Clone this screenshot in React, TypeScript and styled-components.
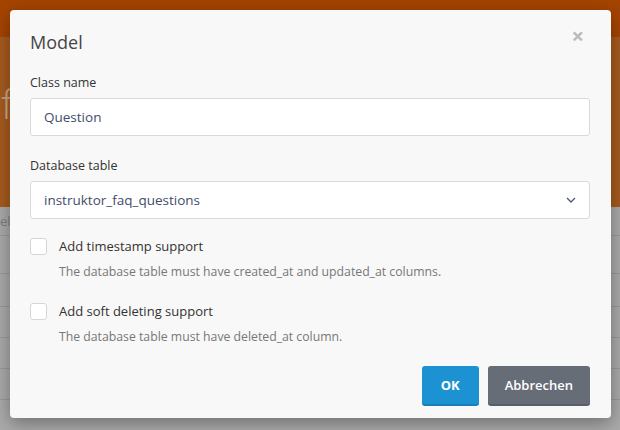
import React from "react";
import styled, { createGlobalStyle } from "styled-components";

const Global = createGlobalStyle`
  html, body { margin: 0; padding: 0; }
  body { width: 620px; height: 430px; overflow: hidden; font-family: "Open Sans", "Noto Sans", sans-serif; }
  * { box-sizing: border-box; }
`;

const Page = styled.div`
  position: relative;
  width: 620px;
  height: 430px;
  overflow: hidden;
  background: #aaaaaa;
  display: flex;
  flex-direction: column;
`;

const TopBar = styled.div`
  height: 37px;
  background: #a54400;
  flex: none;
`;

const Hero = styled.div`
  height: 170px;
  background: #a65b1e;
  flex: none;
  display: flex;
  align-items: center;
`;

const HeroText = styled.div`
  font-size: 40px;
  font-weight: 300;
  color: #c9a88a;
  margin-left: 1px;
  margin-top: -38px;
`;

const TableArea = styled.div`
  flex: 1;
  display: flex;
  flex-direction: column;
`;

const TableRow = styled.div<{ $h: number }>`
  height: ${(p) => p.$h}px;
  border-bottom: 1px solid #999999;
  display: flex;
  align-items: center;
  font-size: 13px;
  color: #7d7d7d;
  flex: none;
`;

const Overlay = styled.div`
  position: absolute;
  inset: 0;
`;

const Modal = styled.div`
  position: absolute;
  left: 10px;
  top: 10px;
  width: 601px;
  height: 408px;
  background: #f8f8f8;
  border-radius: 4px;
  box-shadow: 0 5px 18px rgba(0, 0, 0, 0.35);
  display: flex;
  flex-direction: column;
`;

const Header = styled.div`
  display: flex;
  align-items: flex-start;
  justify-content: space-between;
  padding: 20px 27px 0 20px;
  height: 64px;
`;

const Title = styled.h4`
  margin: 0;
  font-size: 18px;
  font-weight: 400;
  color: #454545;
  line-height: 24px;
`;

const Close = styled.span`
  font-size: 22px;
  font-weight: 700;
  color: #bbbbbb;
  line-height: 10px;
`;

const Body = styled.div`
  display: flex;
  flex-direction: column;
  padding: 0 21px 0 20px;
`;

const Field = styled.div<{ $mb: number }>`
  display: flex;
  flex-direction: column;
  margin-bottom: ${(p) => p.$mb}px;
`;

const Label = styled.label`
  font-size: 12.5px;
  color: #333;
  line-height: 18px;
  margin-bottom: 6px;
`;

const InputBox = styled.div`
  height: 38px;
  background: #fff;
  border: 1px solid #d9d9d9;
  border-radius: 3px;
  display: flex;
  align-items: center;
  justify-content: space-between;
  padding: 0 13px;
  font-size: 13.5px;
  color: #3f4d6b;
`;

const Check = styled.div<{ $mb: number }>`
  display: flex;
  flex-direction: column;
  margin-bottom: ${(p) => p.$mb}px;
`;

const CheckRow = styled.div`
  display: flex;
  align-items: center;
  gap: 12px;
  height: 18px;
`;

const Box = styled.span`
  width: 17px;
  height: 17px;
  border: 1px solid #d6d6d6;
  background: #fff;
  border-radius: 3px;
  flex: none;
`;

const CheckLabel = styled.span`
  font-size: 13px;
  color: #333;
`;

const Help = styled.div`
  font-size: 12.25px;
  color: #777;
  margin-left: 29px;
  margin-top: 8px;
  line-height: 18px;
`;

const Footer = styled.div`
  display: flex;
  justify-content: flex-end;
  gap: 9px;
  padding: 0 21px 0 20px;
`;

const Button = styled.button<{ $variant: "primary" | "secondary" }>`
  height: 40px;
  border: none;
  border-radius: 3px;
  font-family: inherit;
  font-size: 13px;
  font-weight: ${(p) => (p.$variant === "primary" ? 700 : 600)};
  color: #fff;
  padding: 0 ${(p) => (p.$variant === "primary" ? 19 : 17)}px;
  background: ${(p) => (p.$variant === "primary" ? "#1c92d2" : "#666d77")};
  border-bottom: 2px solid ${(p) => (p.$variant === "primary" ? "#1a7fb8" : "#595f68")};
`;

const Chevron = () => (
  <svg width="10" height="6" viewBox="0 0 10 6" fill="none">
    <path d="M1 1l4 4 4-4" stroke="#4b5777" strokeWidth="1.3" />
  </svg>
);

export default function App() {
  return (
    <>
      <Global />
      <Page>
        <TopBar />
        <Hero>
          <HeroText>f</HeroText>
        </Hero>
        <TableArea>
          <TableRow $h={29}>el</TableRow>
          <TableRow $h={38} />
          <TableRow $h={33} />
          <TableRow $h={31} />
          <TableRow $h={31} />
          <TableRow $h={31} />
        </TableArea>
        <Overlay>
          <Modal>
            <Header>
              <Title>Model</Title>
              <Close>×</Close>
            </Header>
            <Body>
              <Field $mb={21}>
                <Label>Class name</Label>
                <InputBox>Question</InputBox>
              </Field>
              <Field $mb={18}>
                <Label>Database table</Label>
                <InputBox>
                  instruktor_faq_questions
                  <Chevron />
                </InputBox>
              </Field>
              <Check $mb={21}>
                <CheckRow>
                  <Box />
                  <CheckLabel>Add timestamp support</CheckLabel>
                </CheckRow>
                <Help>The database table must have created_at and updated_at columns.</Help>
              </Check>
              <Check $mb={20}>
                <CheckRow>
                  <Box />
                  <CheckLabel>Add soft deleting support</CheckLabel>
                </CheckRow>
                <Help>The database table must have deleted_at column.</Help>
              </Check>
            </Body>
            <Footer>
              <Button $variant="primary">OK</Button>
              <Button $variant="secondary">Abbrechen</Button>
            </Footer>
          </Modal>
        </Overlay>
      </Page>
    </>
  );
}
